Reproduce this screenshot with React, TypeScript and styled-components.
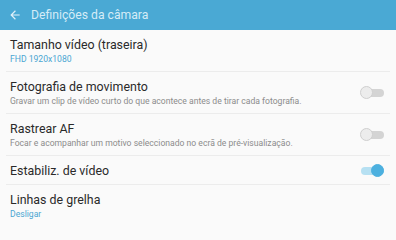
import React from "react";
import styled, { createGlobalStyle } from "styled-components";

const Global = createGlobalStyle`
  body {
    margin: 0;
    background: #fafafa;
    font-family: Roboto, "Noto Sans", sans-serif;
  }
`;

const Page = styled.div`
  width: 396px;
  height: 222px;
  overflow: hidden;
  background: #fafafa;
`;

const Header = styled.div`
  height: 30px;
  background: #4aa9d4;
  display: flex;
  align-items: center;
  padding-left: 8px;
  gap: 9px;
`;

const HeaderTitle = styled.span`
  color: #d5ecf7;
  font-size: 12.2px;
`;

const List = styled.div`
  display: flex;
  flex-direction: column;
`;

const Row = styled.div<{ $tall: boolean }>`
  height: ${(p) => (p.$tall ? 42 : 29)}px;
  margin: 0 6px;
  padding: 1px 4px 0;
  display: flex;
  align-items: center;
  border-bottom: 1px solid #ececec;
  box-sizing: border-box;
`;

const Texts = styled.div`
  flex: 1;
  display: flex;
  flex-direction: column;
  gap: 1px;
`;

const Title = styled.div`
  font-size: 12.4px;
  color: #2a2a2a;
  line-height: 16px;
`;

const Sub = styled.div<{ $accent?: boolean }>`
  font-size: 8.6px;
  line-height: 11px;
  color: ${(p) => (p.$accent ? "#4aa6d2" : "#8c8c8c")};
`;

const Track = styled.div<{ $on: boolean }>`
  position: relative;
  width: 23px;
  height: 8px;
  border-radius: 4px;
  margin-right: 2px;
  background: ${(p) => (p.$on ? "#b6e0f2" : "#d4d4d4")};
`;

const Thumb = styled.div<{ $on: boolean }>`
  position: absolute;
  top: -3px;
  left: ${(p) => (p.$on ? 10 : -1)}px;
  width: 13px;
  height: 13px;
  border-radius: 50%;
  box-sizing: border-box;
  background: ${(p) => (p.$on ? "#4cb0df" : "#ececec")};
  border: 1px solid ${(p) => (p.$on ? "#4cb0df" : "#cfcfcf")};
`;

const Switch = ({ on }: { on: boolean }) => (
  <Track $on={on}>
    <Thumb $on={on} />
  </Track>
);

const Back = () => (
  <svg width="14" height="14" viewBox="0 0 24 24">
    <path d="M20 11H7.8l5.6-5.6L12 4l-8 8 8 8 1.4-1.4L7.8 13H20z" fill="#e2f1f9" />
  </svg>
);

type Item = { title: string; sub?: string; accent?: boolean; toggle?: boolean; on?: boolean };

const items: Item[] = [
  { title: "Tamanho vídeo (traseira)", sub: "FHD 1920x1080", accent: true },
  {
    title: "Fotografia de movimento",
    sub: "Gravar um clip de vídeo curto do que acontece antes de tirar cada fotografia.",
    toggle: true,
    on: false,
  },
  {
    title: "Rastrear AF",
    sub: "Focar e acompanhar um motivo seleccionado no ecrã de pré-visualização.",
    toggle: true,
    on: false,
  },
  { title: "Estabiliz. de vídeo", toggle: true, on: true },
  { title: "Linhas de grelha", sub: "Desligar", accent: true },
];

export default function App() {
  return (
    <Page>
      <Global />
      <Header>
        <Back />
        <HeaderTitle>Definições da câmara</HeaderTitle>
      </Header>
      <List>
        {items.map((it) => (
          <Row key={it.title} $tall={!!it.sub}>
            <Texts>
              <Title>{it.title}</Title>
              {it.sub && <Sub $accent={it.accent}>{it.sub}</Sub>}
            </Texts>
            {it.toggle && <Switch on={!!it.on} />}
          </Row>
        ))}
      </List>
    </Page>
  );
}
